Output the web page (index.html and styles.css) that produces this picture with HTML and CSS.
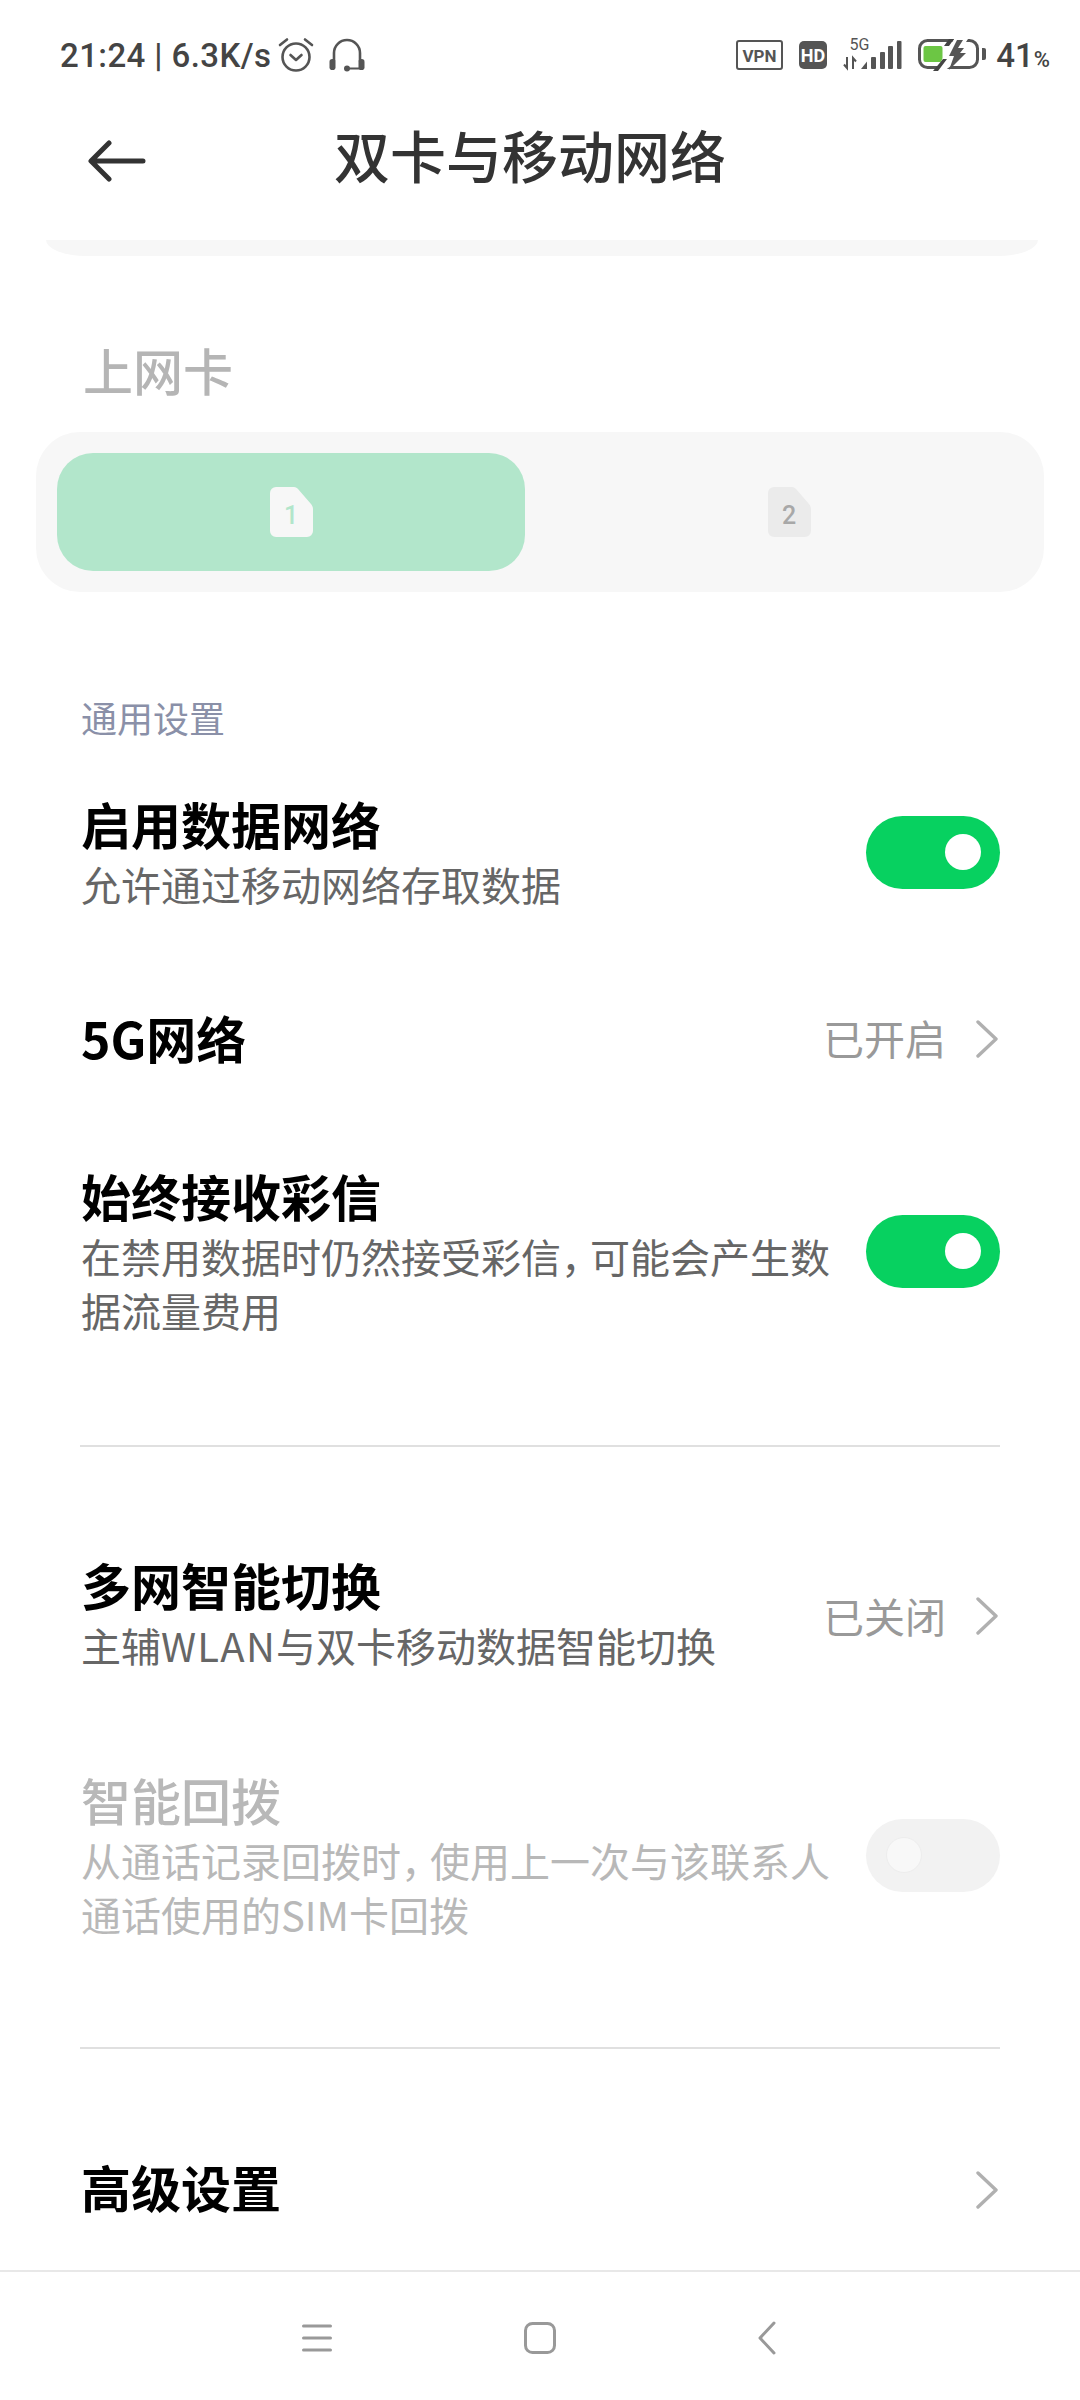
FILE: index.html
```html
<!DOCTYPE html>
<html lang="zh-CN">
<head>
  <meta charset="UTF-8" />
  <meta name="viewport" content="width=device-width, initial-scale=1.0" />
  <title>双卡与移动网络</title>
  <link rel="stylesheet" href="styles.css">
</head>
<body>

<div class="page">

  <!-- Status bar -->
  <div class="status-bar">
    <div class="status-left">
      <span class="status-text">21:24 | 6.3K/s</span>
      <svg class="icon-alarm" viewBox="0 0 36 36" fill="none" stroke="#555" stroke-linecap="round">
        <circle cx="18" cy="20" r="13.500" stroke-width="2.600"/>
        <path d="M12.500 18l5.500 5 5.500-5" stroke-width="2.600" stroke-linejoin="round"/>
        <path d="M2 8l7-5.500M34 8l-7-5.500" stroke-width="2.600"/>
      </svg>
      <svg class="icon-headset" viewBox="0 0 36 34" fill="none" stroke="#555" stroke-linecap="round">
        <path d="M5 23V15a13 13 0 0 1 26 0v8" stroke-width="2.600"/>
        <rect x="0.500" y="21" width="6" height="11" rx="2.800" fill="#555" stroke="none"/>
        <rect x="29.500" y="21" width="6" height="11" rx="2.800" fill="#555" stroke="none"/>
        <circle cx="18" cy="30.500" r="3" fill="#555" stroke="none"/>
        <path d="M18 30.500h14" stroke-width="2"/>
      </svg>
    </div>
    <div class="status-right">
      <svg class="icon-vpn" viewBox="0 0 47 30">
        <rect x="1" y="1" width="45" height="28" rx="2" fill="none" stroke="#555" stroke-width="2"/>
        <text x="23.500" y="21.500" text-anchor="middle" class="vpn-label">VPN</text>
      </svg>
      <svg class="icon-hd" viewBox="0 0 28 28">
        <rect width="28" height="28" rx="5" fill="#555"/>
        <text x="14" y="20.500" text-anchor="middle" class="hd-label">HD</text>
      </svg>
      <svg class="icon-signal" viewBox="0 0 60 36">
        <text x="16.500" y="14" text-anchor="middle" class="net-label">5G</text>
        <path d="M4 21v11l-3-3.500M10 33V22l3 3.500" fill="none" stroke="#555" stroke-width="2"/>
        <path d="M18 33l6-7.500V33z" fill="#555"/>
        <rect x="28" y="21" width="5" height="12" rx="1" fill="#555"/>
        <rect x="37" y="16" width="5" height="17" rx="1" fill="#555"/>
        <rect x="45" y="10" width="5" height="23" rx="1" fill="#555"/>
        <rect x="54" y="5" width="4.500" height="28" rx="1" fill="#555"/>
      </svg>
      <svg class="icon-battery" viewBox="0 0 68 32">
        <rect x="1.500" y="1.500" width="58" height="27" rx="8" fill="none" stroke="#555" stroke-width="3"/>
        <rect x="5.500" y="7" width="19" height="16" rx="2" fill="#6cc644"/>
        <path d="M64 9h2a2 2 0 0 1 2 2v8a2 2 0 0 1-2 2h-2z" fill="#555"/>
        <path d="M18 31L36 0h14l-6 9h6l-5 5h6L26 32z" fill="#fff"/>
        <path d="M31 0h5l-5 7h-5zM25 20h4l-9 12h-5z" fill="#444"/>
        <path d="M31 17l8-16h6l-5 8h6l-4 5h6L31 31l5-14z" fill="#555"/>
      </svg>
      <span class="battery-text">41<small>%</small></span>
    </div>
  </div>

  <!-- Title bar -->
  <div class="title-bar">
    <svg class="icon-back" viewBox="0 0 58 42" fill="none" stroke="#333" stroke-width="5" stroke-linecap="round" stroke-linejoin="round">
      <path d="M55 21H4M21 3L3 21l18 18"/>
    </svg>
    <h1 class="page-title">双卡与移动网络</h1>
  </div>

  <!-- Settings list -->
  <div class="content">
    <div class="card-stub"></div>

    <div class="sim-title">上网卡</div>
    <div class="sim-switch">
      <div class="sim-option active">
        <svg class="icon-sim" viewBox="0 0 43 50">
          <path d="M6 0h18c2 0 3 1 4 2l13 15c1 1 2 3 2 5v22a6 6 0 0 1-6 6H6a6 6 0 0 1-6-6V6a6 6 0 0 1 6-6z" fill="#f7f7f7"/>
          <text x="21" y="37" text-anchor="middle" class="sim-num num-active">1</text>
        </svg>
      </div>
      <div class="sim-option second">
        <svg class="icon-sim" viewBox="0 0 43 50">
          <path d="M6 0h18c2 0 3 1 4 2l13 15c1 1 2 3 2 5v22a6 6 0 0 1-6 6H6a6 6 0 0 1-6-6V6a6 6 0 0 1 6-6z" fill="#ebebeb"/>
          <text x="21" y="37" text-anchor="middle" class="sim-num">2</text>
        </svg>
      </div>
    </div>

    <div class="group-title">通用设置</div>

    <div class="row row-data">
      <div class="row-text">
        <div class="row-title">启用数据网络</div>
        <div class="row-sub">允许通过移动网络存取数据</div>
      </div>
      <div class="toggle on"><span class="knob"></span></div>
    </div>

    <div class="row row-5g">
      <div class="row-text">
        <div class="row-title">5G网络</div>
      </div>
      <span class="row-value">已开启</span>
      <svg class="chevron" viewBox="0 0 22 38" fill="none" stroke="#b0b0b0" stroke-width="3.400" stroke-linecap="round" stroke-linejoin="round"><path d="M2 2l18 17L2 36"/></svg>
    </div>

    <div class="row row-mms">
      <div class="row-text">
        <div class="row-title">始终接收彩信</div>
        <div class="row-sub">在禁用数据时仍然接受彩信<span class="comma">，</span>可能会产生数据流量费用</div>
      </div>
      <div class="toggle on"><span class="knob"></span></div>
    </div>

    <div class="divider divider-first"></div>

    <div class="row row-switch">
      <div class="row-text">
        <div class="row-title">多网智能切换</div>
        <div class="row-sub">主辅<span class="latin">WLAN</span>与双卡移动数据智能切换</div>
      </div>
      <span class="row-value">已关闭</span>
      <svg class="chevron" viewBox="0 0 22 38" fill="none" stroke="#b0b0b0" stroke-width="3.400" stroke-linecap="round" stroke-linejoin="round"><path d="M2 2l18 17L2 36"/></svg>
    </div>

    <div class="row row-redial disabled">
      <div class="row-text">
        <div class="row-title">智能回拨</div>
        <div class="row-sub">从通话记录回拨时<span class="comma">，</span>使用上一次与该联系人通话使用的SIM卡回拨</div>
      </div>
      <div class="toggle off"><span class="knob"></span></div>
    </div>

    <div class="divider divider-second"></div>

    <div class="row row-advanced">
      <div class="row-text">
        <div class="row-title">高级设置</div>
      </div>
      <svg class="chevron" viewBox="0 0 22 38" fill="none" stroke="#b0b0b0" stroke-width="3.400" stroke-linecap="round" stroke-linejoin="round"><path d="M2 2l18 17L2 36"/></svg>
    </div>
  </div>

  <!-- Navigation bar -->
  <div class="nav-bar">
    <svg class="nav-menu" viewBox="0 0 30 28" fill="none" stroke="#999" stroke-width="3" stroke-linecap="round"><path d="M1.500 2h27M1.500 14h27M1.500 26h27"/></svg>
    <svg class="nav-home" viewBox="0 0 32 32" fill="none" stroke="#999" stroke-width="3"><rect x="1.500" y="1.500" width="29" height="29" rx="7"/></svg>
    <svg class="nav-back" viewBox="0 0 18 34" fill="none" stroke="#999" stroke-width="3" stroke-linecap="round" stroke-linejoin="round"><path d="M16 2L2 17l14 15"/></svg>
  </div>

</div>

</body>
</html>
```

FILE: styles.css
```css
/* General */
* {
  box-sizing: border-box;
}

body {
  margin: 0;
  background-color: #ffffff;
  font-family: "Noto Sans CJK SC", sans-serif;
  color: #000000;
}

.page {
  display: flex;
  flex-direction: column;
  width: 1080px;
  height: 2400px;
  overflow: hidden;
}

/* Status bar */
.status-bar {
  display: flex;
  justify-content: space-between;
  align-items: center;
  height: 110px;
  padding: 0 30px 0 60px;
  flex-shrink: 0;
}

.status-left,
.status-right {
  display: flex;
  align-items: center;
}

.status-text {
  font-family: Roboto, sans-serif;
  font-size: 33px;
  font-weight: 500;
  color: #444444;
  letter-spacing: 0.4px;
}

.icon-alarm {
  width: 36px;
  height: 36px;
  margin-left: 7px;
}

.icon-headset {
  width: 36px;
  height: 34px;
  margin-left: 15px;
}

.icon-vpn {
  width: 47px;
  height: 30px;
}

.vpn-label {
  font-family: Roboto, sans-serif;
  font-size: 17px;
  font-weight: 700;
  fill: #555555;
}

.icon-hd {
  width: 28px;
  height: 28px;
  margin-left: 16px;
}

.hd-label {
  font-family: Roboto, sans-serif;
  font-size: 18px;
  font-weight: 700;
  fill: #ffffff;
}

.icon-signal {
  width: 60px;
  height: 36px;
  margin-left: 16px;
  margin-bottom: 2px;
}

.net-label {
  font-family: Roboto, sans-serif;
  font-size: 16px;
  fill: #555555;
}

.icon-battery {
  width: 68px;
  height: 32px;
  margin-left: 15px;
}

.battery-text {
  margin-left: 10px;
  font-family: Roboto, sans-serif;
  font-size: 33px;
  font-weight: 500;
  color: #444444;
}

.battery-text small {
  font-size: 22px;
}

/* Title bar */
.title-bar {
  display: flex;
  align-items: center;
  height: 130px;
  padding: 0 0 36px 88px;
  flex-shrink: 0;
}

.icon-back {
  width: 58px;
  height: 42px;
  margin-top: 8px;
  flex-shrink: 0;
}

.page-title {
  margin: 0 0 6px 188px;
  font-size: 56px;
  font-weight: 500;
  line-height: 70px;
  color: #333333;
}

/* Content */
.content {
  flex: 1;
  min-height: 0;
}

.card-stub {
  height: 16px;
  margin: 0 42px 0 46px;
  background-color: #f7f7f7;
  border-radius: 0 0 40px 40px / 0 0 16px 16px;
}

.sim-title {
  margin: 83px 0 33px 83px;
  font-size: 50px;
  font-weight: 500;
  line-height: 60px;
  color: #b5b5b5;
}

.sim-switch {
  display: flex;
  height: 160px;
  margin: 0 36px;
  padding: 21px;
  background-color: #f7f7f7;
  border-radius: 44px;
}

.sim-option {
  display: flex;
  justify-content: center;
  align-items: center;
  width: 468px;
  border-radius: 36px;
}

.sim-option.second {
  flex: 1;
  padding-left: 30px;
}

.sim-option.active {
  background-color: #b2e6cb;
}

.icon-sim {
  width: 43px;
  height: 50px;
}

.sim-num {
  font-family: Roboto, sans-serif;
  font-size: 25px;
  font-weight: 500;
  fill: #a8a8a8;
}

.num-active {
  fill: #b2e6cb;
}

.group-title {
  margin: 100px 0 0 81px;
  font-size: 36px;
  line-height: 50px;
  color: #8a90a8;
}

/* Rows */
.row {
  display: flex;
  align-items: center;
  padding: 0 80px 0 81px;
}

.row-text {
  flex: 1;
  min-width: 0;
}

.row-title {
  font-size: 50px;
  font-weight: 700;
  line-height: 60px;
}

.row-sub {
  max-width: 760px;
  margin-top: 4px;
  font-size: 40px;
  line-height: 54px;
  color: #666666;
}

/* half-width comma, the reference sets it tighter than a full cell */
.comma {
  font-feature-settings: "halt";
  margin-right: 9px;
}

.latin {
  letter-spacing: 1.2px;
}

.row-value {
  font-size: 41px;
  color: #999999;
}

.chevron {
  width: 22px;
  height: 38px;
  margin: 0 2px 0 30px;
  flex-shrink: 0;
}

.row-data {
  margin-top: 51px;
  padding-bottom: 14px;
}

.row-5g {
  margin-top: 82px;
}

.row-5g .chevron {
  margin-top: 3px;
}

.row-mms {
  margin-top: 98px;
  padding-bottom: 17px;
}

.row-switch {
  margin-top: 107px;
}

.row-switch .row-value {
  margin-top: 3px;
}

.row-switch .chevron {
  margin-top: 6px;
}

.row-redial {
  margin-top: 97px;
  padding-bottom: 18px;
}

.row-advanced {
  margin-top: 107px;
}

.row-advanced .chevron {
  margin-top: 7px;
}

.row.disabled .row-title {
  font-weight: 500;
}

.row.disabled .row-title,
.row.disabled .row-sub {
  color: #b8b8b8;
}

/* Toggle */
.toggle {
  display: flex;
  align-items: center;
  width: 134px;
  height: 73px;
  flex-shrink: 0;
  border-radius: 37px;
}

.toggle.on {
  justify-content: flex-end;
  padding-right: 19px;
  background-color: #07d160;
}

.toggle.off {
  padding-left: 20px;
  background-color: #f2f2f2;
}

.knob {
  width: 36px;
  height: 36px;
  border-radius: 50%;
  background-color: #ffffff;
}

.toggle.off .knob {
  background-color: #f8f8f8;
  border: 1px solid #ededed;
}

/* Dividers */
.divider {
  height: 2px;
  margin: 0 80px;
  background-color: #e0e0e0;
}

.divider-first {
  margin-top: 91px;
}

.divider-second {
  margin-top: 88px;
}

/* Navigation bar */
.nav-bar {
  display: flex;
  align-items: center;
  height: 130px;
  padding: 4px 0 0 302px;
  flex-shrink: 0;
  border-top: 2px solid #e8e8e8;
}

.nav-menu {
  width: 30px;
  height: 28px;
}

.nav-home {
  width: 32px;
  height: 32px;
  margin-left: 192px;
}

.nav-back {
  width: 18px;
  height: 34px;
  margin-left: 202px;
}
```
